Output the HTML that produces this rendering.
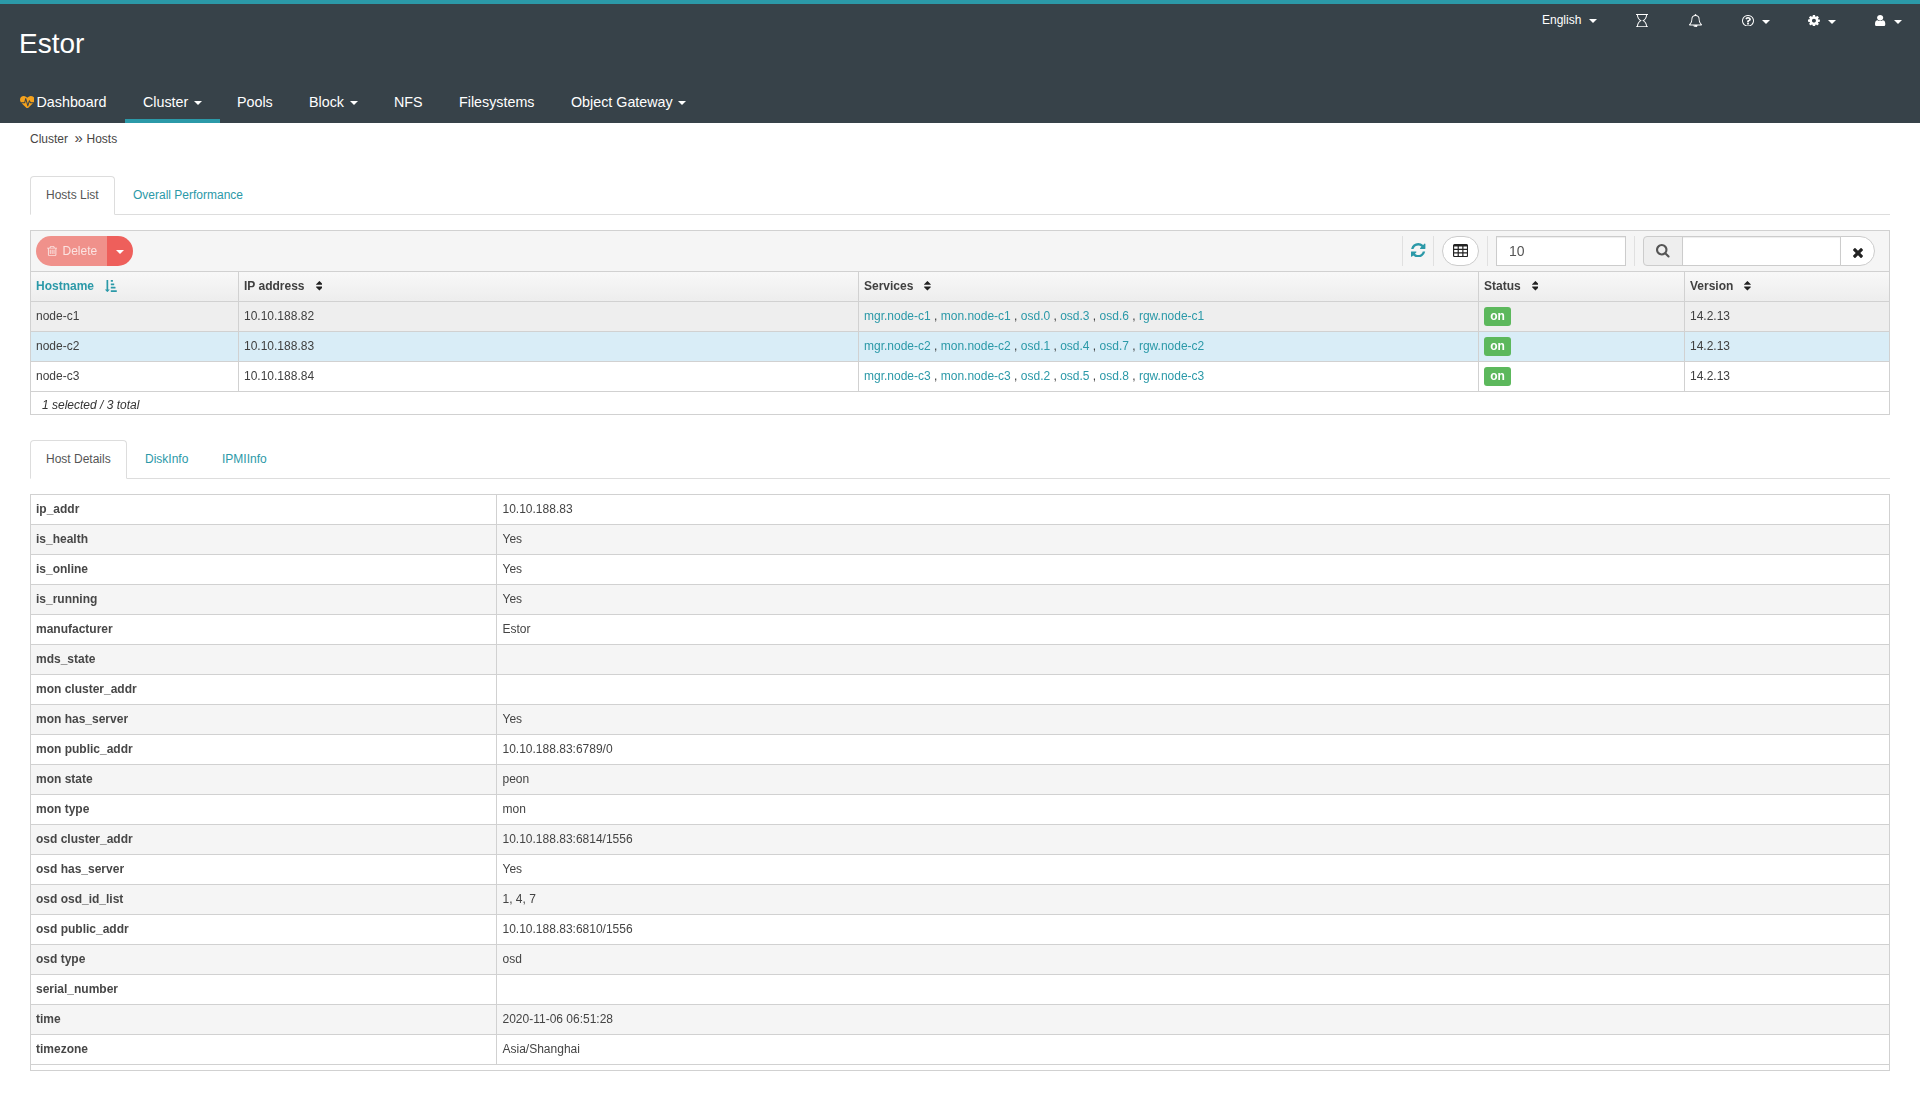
<!DOCTYPE html>
<html lang="en">
<head>
<meta charset="utf-8">
<title>Estor</title>
<style>
*{box-sizing:border-box}
html,body{margin:0;padding:0}
body{width:1920px;height:1096px;overflow:hidden;background:#fff;color:#333;
  font-family:"Liberation Sans",Arial,Helvetica,sans-serif;font-size:12px;line-height:17px}
a{color:#2b99a8;text-decoration:none}
svg{display:block}
.abs{position:absolute}
#hdr{position:absolute;left:0;top:0;width:1920px;height:123px;background:#374249}
#topbar{position:absolute;left:0;top:0;width:1920px;height:4px;background:#2b99a8}
#brand{position:absolute;left:19px;top:24px;font-size:28px;line-height:40px;color:#fff;white-space:nowrap}
.nv{position:absolute;top:91px;height:22px;line-height:22px;font-size:14.300px;color:#fff;white-space:nowrap}
.caret{display:inline-block;width:0;height:0;border-left:4px solid transparent;border-right:4px solid transparent;border-top:4px solid #fff;vertical-align:middle}
#actv{position:absolute;left:125px;top:119px;width:95px;height:4px;background:#2b99a8}
.tr{position:absolute;top:12px;height:17px;line-height:17px;font-size:12px;color:#fff;white-space:nowrap}
#bc{position:absolute;left:30px;top:131px;height:17px;white-space:nowrap;color:#474544}
.tabs{position:absolute;left:30px;width:1860px;height:39px;border-bottom:1px solid #ddd}
.tabs .t{position:absolute;top:0;height:39px;padding:10px 15px;border:1px solid transparent;border-radius:4px 4px 0 0;color:#2b99a8;white-space:nowrap}
.tabs .t.on{border-color:#ddd;border-bottom-color:#fff;background:#fff;color:#555}
#wrap{position:absolute;left:30px;top:230px;width:1860px;height:185px;border:1px solid #d1d1d1;background:#fff;will-change:transform}
#tb{position:absolute;left:0;top:0;width:1858px;height:40px;background:#f5f5f5}
.sep{position:absolute;top:5px;width:1px;height:30px;background:#e0e0e0}
.row{position:absolute;left:0;width:1858px;height:30px;border-top:1px solid #d1d1d1}
.row .c{position:absolute;top:0;height:29px;line-height:17px;color:#404040;padding:6px 5px 0 5px;white-space:nowrap;border-left:1px solid #d1d1d1}
.row .c:first-child{border-left:none}
.c1{left:0;width:207px}.c2{left:207px;width:620px}.c3{left:827px;width:620px}.c4{left:1447px;width:206px}.c5{left:1653px;width:205px}
.hd{background:linear-gradient(#f8f8f8,#ededed);font-weight:bold;color:#444}
.badge{display:inline-block;width:27px;height:19px;line-height:18px;border-radius:3px;background:#5cb85c;color:#fff;font-weight:bold;text-align:center;font-size:12px;position:relative;top:-1px;left:0}
#del{position:absolute;left:5px;top:5px;width:71px;height:30px;border-radius:15px 0 0 15px;background:#f0918b;color:#fff;font-size:12px;line-height:30px;white-space:nowrap}
#del span{position:absolute;left:26.500px;top:0;color:#fbe3e1}
#delc{position:absolute;left:76px;top:5px;width:26px;height:30px;border-radius:0 15px 15px 0;background:#ee5f5b}
#colbtn{position:absolute;left:1411px;top:5px;width:37px;height:30px;border:1px solid #ccc;border-radius:15px;background:#fff}
#num{position:absolute;left:1465px;top:5px;width:130px;height:30px;border:1px solid #ccc;background:#fff;color:#555;font-size:14px;line-height:29px;padding-left:12px;box-shadow:inset 0 1px 1px rgba(0,0,0,.075)}
#srch{position:absolute;left:1612px;top:5px;width:232px;height:30px}
#sa{position:absolute;left:0;top:0;width:40px;height:30px;border:1px solid #ccc;border-radius:4px 0 0 4px;background:#eee}
#si{position:absolute;left:39px;top:0;width:159px;height:30px;border:1px solid #ccc;background:#fff;box-shadow:inset 0 1px 1px rgba(0,0,0,.075)}
#sx{position:absolute;left:197px;top:0;width:35px;height:30px;border:1px solid #ccc;border-radius:0 15px 15px 0;background:#fff}
#dt{position:absolute;left:30px;top:494px;width:1860px;height:577px;border:1px solid #d1d1d1;will-change:transform}
#dt .r{position:absolute;left:0;width:1858px;height:30px;border-bottom:1px solid #d1d1d1}
#dt .r.o{background:#f5f5f5}
#dt .k{position:absolute;left:0;top:0;width:465px;height:29px;padding:6px 5px 0 5px;font-weight:bold;white-space:nowrap;color:#474747}
#dt .v{position:absolute;left:465px;top:0;width:1393px;height:29px;padding:6px 5px 0 5.500px;border-left:1px solid #d1d1d1;white-space:nowrap;color:#444}
</style>
</head>
<body>
<div id="hdr">
<div id="topbar"></div>
<div id="brand">Estor</div>
<svg class="abs" style="left:19.9px;top:95.5px" width="14.6" height="12.51" viewBox="0 128 1792 1536" preserveAspectRatio="none"><path fill="#f5a21d" d="M1280 1024h305q-5 6-10 10.500t-9 7.500l-3 4-623 600q-18 18-44 18t-44-18l-624-602q-5-2-21-20h369q22 0 39.500-13.500t22.500-34.500l70-281 190 667q6 20 23 33t39 13q21 0 38-13t23-33l146-485 56 112q18 35 57 35zm512-428q0 145-103 300h-369l-111-221q-8-17-25.500-27t-36.500-8q-45 5-56 46l-129 430-196-686q-6-20-23.500-33t-39.500-13-39 13.500-22 34.500l-116 464h-423q-103-155-103-300 0-220 127-344t351-124q62 0 126.500 21.500t120 58 95.500 68.500 76 68q36-36 76-68t95.500-68.500 120-58 126.500-21.500q224 0 351 124t127 344z"/></svg>
<div class="nv" style="left:36.500px">Dashboard</div>
<div class="nv" style="left:143px">Cluster</div><span class="caret abs" style="left:194px;top:101px"></span>
<div class="nv" style="left:237px">Pools</div>
<div class="nv" style="left:309px">Block</div><span class="caret abs" style="left:350px;top:101px"></span>
<div class="nv" style="left:394px">NFS</div>
<div class="nv" style="left:459px">Filesystems</div>
<div class="nv" style="left:571px">Object Gateway</div><span class="caret abs" style="left:678px;top:101px"></span>
<div id="actv"></div>
<div class="tr" style="left:1542px">English</div><span class="caret abs" style="left:1589px;top:19px"></span>
<svg class="abs" style="left:1636px;top:13.7px" width="12" height="13.3" viewBox="0 0 1536 1792" preserveAspectRatio="none"><path fill="#fff" d="M1408 128q0 261-106.500 461.500t-266.500 306.500q160 106 266.500 306.500t106.500 461.500h96q14 0 23 9t9 23v64q0 14-9 23t-23 9h-1472q-14 0-23-9t-9-23v-64q0-14 9-23t23-9h96q0-261 106.500-461.500t266.500-306.500q-160-106-266.500-306.500t-106.500-461.500h-96q-14 0-23-9t-9-23v-64q0-14 9-23t23-9h1472q14 0 23 9t9 23v64q0 14-9 23t-23 9h-96zm-534 708q77-29 149-92.500t129.500-152.500 92.500-210 35-253h-1024q0 132 35 253t92.500 210 129.500 152.500 149 92.500q19 7 30.500 23.500t11.500 36.500-11.500 36.500-30.500 23.500q-77 29-149 92.500t-129.500 152.500-92.500 210-35 253h1024q0-132-35-253t-92.500-210-129.500-152.500-149-92.500q-19-7-30.500-23.500t-11.500-36.500 11.500-36.500 30.500-23.500z"/></svg>
<svg class="abs" style="left:1688.6px;top:13.6px" width="13" height="13.4" viewBox="64 0 1664 1792" preserveAspectRatio="none"><path fill="#fff" d="M912 1696q0-16-16-16-59 0-101.500-42.500t-42.500-101.500q0-16-16-16t-16 16q0 73 51.500 124.500t124.500 51.500q16 0 16-16zm-666-288h1300q-266-300-266-832 0-51-24-105t-69-103-121.500-80.500-169.500-31.500-169.500 31.500-121.500 80.500-69 103-24 105q0 532-266 832zm1482 0q0 52-38 90t-90 38h-448q0 106-75 181t-181 75-181-75-75-181h-448q-52 0-90-38t-38-90q50-42 91-88t85-119.500 74.500-158.500 50-206 19.500-260q0-152 117-282.500t307-158.500q-8-19-8-39 0-40 28-68t68-28 68 28 28 68q0 20-8 39 190 28 307 158.500t117 282.500q0 139 19.500 260t50 206 74.500 158.500 85 119.500 91 88z"/></svg>
<svg class="abs" style="left:1742.1px;top:14.7px" width="12" height="11.5" viewBox="128 128 1536 1536" preserveAspectRatio="none"><path fill="#fff" d="M1008 1200v160q0 14-9 23t-23 9h-160q-14 0-23-9t-9-23v-160q0-14 9-23t23-9h160q14 0 23 9t9 23zm256-496q0 50-15 90t-45.500 69-52 44-59.500 36q-32 18-46.500 28t-26 24-11.500 29v32q0 14-9 23t-23 9h-160q-14 0-23-9t-9-23v-68q0-35 10.500-64.500t24-47.500 39-35.500 41-25.500 44.500-21q53-25 75-43t22-49q0-42-43.500-71.500t-95.500-29.500q-56 0-95 27-29 20-80 83-9 12-25 12-11 0-19-6l-108-82q-10-7-12-20t5-23q122-192 349-192 129 0 238.500 89.500t109.500 214.500zm-368-448q-130 0-248.500 51t-204 136.500-136.500 204-51 248.500 51 248.500 136.500 204 204 136.500 248.500 51 248.500-51 204-136.500 136.500-204 51-248.500-51-248.500-136.500-204-204-136.500-248.500-51zm768 640q0 209-103 385.500t-279.500 279.500-385.500 103-385.500-103-279.500-279.500-103-385.500 103-385.500 279.500-279.500 385.500-103 385.500 103 279.500 279.500 103 385.500z"/></svg><span class="caret abs" style="left:1762px;top:20px"></span>
<svg class="abs" style="left:1808.3px;top:14.9px" width="11.9" height="11.3" viewBox="128 128 1536 1536" preserveAspectRatio="none"><path fill="#fff" d="M1152 896q0-106-75-181t-181-75-181 75-75 181 75 181 181 75 181-75 75-181zm512-109v222q0 12-8 23t-20 13l-185 28q-19 54-39 91 35 50 107 138 10 12 10 25t-9 23q-27 37-99 108t-94 71q-12 0-26-9l-138-108q-44 23-91 38-16 136-29 186-7 28-36 28h-222q-14 0-24.500-8.500t-11.500-21.500l-28-184q-49-16-90-37l-141 107q-10 9-25 9-14 0-25-11-126-114-165-168-7-10-7-23 0-12 8-23 15-21 51-66.500t54-70.500q-27-50-41-99l-183-27q-13-2-21-12.500t-8-23.500v-222q0-12 8-23t19-13l186-28q14-46 39-92-40-57-107-138-10-12-10-24 0-10 9-23 26-36 98.500-107.500t94.500-71.500q13 0 26 10l138 107q44-23 91-38 16-136 29-186 7-28 36-28h222q14 0 24.500 8.500t11.500 21.500l28 184q49 16 90 37l142-107q9-9 24-9 13 0 25 10 129 119 165 170 7 8 7 22 0 12-8 23-15 21-51 66.500t-54 70.500q26 50 41 98l183 28q13 2 21 12.500t8 23.500z"/></svg><span class="caret abs" style="left:1828px;top:20px"></span>
<svg class="abs" style="left:1875.3px;top:14.7px" width="10.3" height="11.3" viewBox="256 128 1280 1536" preserveAspectRatio="none"><path fill="#fff" d="M1536 1399q0 109-62.500 187t-150.500 78h-854q-88 0-150.500-78t-62.500-187q0-85 8.500-160.500t31.500-152 58.500-131 94-89 134.500-34.500q131 128 313 128t313-128q76 0 134.500 34.500t94 89 58.500 131 31.500 152 8.500 160.500zm-256-887q0 159-112.500 271.500t-271.500 112.500-271.500-112.500-112.500-271.500 112.500-271.500 271.500-112.500 271.500 112.500 112.500 271.500z"/></svg><span class="caret abs" style="left:1894px;top:20px"></span>
</div>
<div id="content">
<div id="bc">Cluster<span class="abs" style="left:44.500px;top:-2px;font-size:15px;line-height:17px">&raquo;</span><span class="abs" style="left:56.500px;top:0">Hosts</span></div>
<div class="tabs" style="top:176px">
<div class="t on" style="left:0">Hosts List</div>
<div class="t" style="left:87px">Overall Performance</div>
</div>
<div id="wrap">
<div id="tb">
<div id="del"><svg class="abs" style="left:11.1px;top:10px" width="10.3" height="10" viewBox="192 128 1408 1536" preserveAspectRatio="none"><path fill="#fbe3e1" d="M704 736v576q0 14-9 23t-23 9h-64q-14 0-23-9t-9-23v-576q0-14 9-23t23-9h64q14 0 23 9t9 23zm256 0v576q0 14-9 23t-23 9h-64q-14 0-23-9t-9-23v-576q0-14 9-23t23-9h64q14 0 23 9t9 23zm256 0v576q0 14-9 23t-23 9h-64q-14 0-23-9t-9-23v-576q0-14 9-23t23-9h64q14 0 23 9t9 23zm128 724v-948h-896v948q0 22 7 40.500t14.500 27 10.500 8.500h832q3 0 10.500-8.500t14.500-27 7-40.500zm-672-1076h448l-48-117q-7-9-17-11h-317q-10 2-17 11zm928 32v64q0 14-9 23t-23 9h-96v948q0 83-47 143.500t-113 60.500h-832q-66 0-113-58.500t-47-141.500v-952h-96q-14 0-23-9t-9-23v-64q0-14 9-23t23-9h309l70-167q15-37 54-63t79-26h320q40 0 79 26t54 63l70 167h309q14 0 23 9t9 23z"/></svg><span>Delete</span></div>
<div id="delc"><span class="caret abs" style="left:9px;top:14px"></span></div>
<div class="sep" style="left:1371px"></div>
<div class="sep" style="left:1402px"></div>
<div class="sep" style="left:1456px"></div>
<div class="sep" style="left:1603px"></div>
<svg class="abs" style="left:1380.3px;top:11.8px" width="14.4" height="14.4" viewBox="0 0 1536 1536" preserveAspectRatio="none"><path fill="#2b99a8" d="M1511 928q0 5-1 7-64 268-268 434.500t-478 166.500q-146 0-282.500-55t-243.500-157l-129 129q-19 19-45 19t-45-19-19-45v-448q0-26 19-45t45-19h448q26 0 45 19t19 45-19 45l-137 137q71 66 161 102t187 36q134 0 250-65t186-179q11-17 53-117 8-23 30-23h192q13 0 22.500 9.500t9.500 22.500zm25-800v448q0 26-19 45t-45 19h-448q-26 0-45-19t-19-45 19-45l138-138q-148-137-349-137-134 0-250 65t-186 179q-11 17-53 117-8 23-30 23h-199q-13 0-22.500-9.500t-9.500-22.500v-7q65-268 270-434.500t480-166.500q146 0 284 55.500t245 156.500l130-129q19-19 45-19t45 19 19 45z"/></svg>
<div id="colbtn"><svg class="abs" style="left:10.1px;top:6.9px" width="15.1" height="13.1" viewBox="64 128 1664 1408" preserveAspectRatio="none"><path fill="#222" d="M576 1376v-192q0-14-9-23t-23-9h-320q-14 0-23 9t-9 23v192q0 14 9 23t23 9h320q14 0 23-9t9-23zm0-384v-192q0-14-9-23t-23-9h-320q-14 0-23 9t-9 23v192q0 14 9 23t23 9h320q14 0 23-9t9-23zm512 384v-192q0-14-9-23t-23-9h-320q-14 0-23 9t-9 23v192q0 14 9 23t23 9h320q14 0 23-9t9-23zm-512-768v-192q0-14-9-23t-23-9h-320q-14 0-23 9t-9 23v192q0 14 9 23t23 9h320q14 0 23-9t9-23zm512 384v-192q0-14-9-23t-23-9h-320q-14 0-23 9t-9 23v192q0 14 9 23t23 9h320q14 0 23-9t9-23zm512 384v-192q0-14-9-23t-23-9h-320q-14 0-23 9t-9 23v192q0 14 9 23t23 9h320q14 0 23-9t9-23zm-512-768v-192q0-14-9-23t-23-9h-320q-14 0-23 9t-9 23v192q0 14 9 23t23 9h320q14 0 23-9t9-23zm512 384v-192q0-14-9-23t-23-9h-320q-14 0-23 9t-9 23v192q0 14 9 23t23 9h320q14 0 23-9t9-23zm0-384v-192q0-14-9-23t-23-9h-320q-14 0-23 9t-9 23v192q0 14 9 23t23 9h320q14 0 23-9t9-23zm128-320v1088q0 66-47 113t-113 47h-1344q-66 0-113-47t-47-113v-1088q0-66 47-113t113-47h1344q66 0 113 47t47 113z"/></svg></div>
<div id="num">10</div>
<div id="srch"><div id="sa"><svg class="abs" style="left:12.2px;top:7.2px" width="13.6" height="13.6" viewBox="64 128 1664 1664" preserveAspectRatio="none"><path fill="#555" d="M1216 832q0-185-131.500-316.500t-316.500-131.500-316.500 131.500-131.500 316.500 131.500 316.500 316.500 131.500 316.500-131.500 131.500-316.500zm512 832q0 52-38 90t-90 38q-54 0-90-38l-343-342q-179 124-399 124-143 0-273.500-55.500t-225-150-150-225-55.500-273.500 55.500-273.500 150-225 225-150 273.500-55.500 273.500 55.500 225 150 150 225 55.500 273.500q0 220-124 399l343 343q37 37 37 90z"/></svg></div><div id="si"></div><div id="sx"><svg class="abs" style="left:11.8px;top:10.6px" width="10" height="10" viewBox="302 366 1188 1188" preserveAspectRatio="none"><path fill="#222" d="M1490 1322q0 40-28 68l-136 136q-28 28-68 28t-68-28l-294-294-294 294q-28 28-68 28t-68-28l-136-136q-28-28-28-68t28-68l294-294-294-294q-28-28-28-68t28-68l136-136q28-28 68-28t68 28l294 294 294-294q28-28 68-28t68 28l136 136q28 28 28 68t-28 68l-294 294 294 294q28 28 28 68z"/></svg></div></div>
</div>
<div class="row hd" style="top:40px">
<div class="c c1" style="color:#2b99a8">Hostname<svg class="abs" style="left:74.1px;top:8px" width="11.79" height="12" viewBox="31.2174 0 1760.78 1792" preserveAspectRatio="none"><path fill="#2b99a8" d="M736 1440q0 12-10 24l-319 319q-10 9-23 9-12 0-23-9l-320-320q-15-16-7-35 8-20 30-20h192v-1376q0-14 9-23t23-9h192q14 0 23 9t9 23v1376h192q14 0 23 9t9 23zm1056 128v192q0 14-9 23t-23 9h-832q-14 0-23-9t-9-23v-192q0-14 9-23t23-9h832q14 0 23 9t9 23zm-192-512v192q0 14-9 23t-23 9h-640q-14 0-23-9t-9-23v-192q0-14 9-23t23-9h640q14 0 23 9t9 23zm-192-512v192q0 14-9 23t-23 9h-448q-14 0-23-9t-9-23v-192q0-14 9-23t23-9h448q14 0 23 9t9 23zm-192-512v192q0 14-9 23t-23 9h-256q-14 0-23-9t-9-23v-192q0-14 9-23t23-9h256q14 0 23 9t9 23z"/></svg></div>
<div class="c c2">IP address<svg class="abs" style="left:76.6px;top:9.2px" width="6.86" height="9.43" viewBox="384 192 1024 1408" preserveAspectRatio="none"><path fill="#222" d="M1408 1088q0 26-19 45l-448 448q-19 19-45 19t-45-19l-448-448q-19-19-19-45t19-45 45-19h896q26 0 45 19t19 45zm0-384q0 26-19 45t-45 19h-896q-26 0-45-19t-19-45 19-45l448-448q19-19 45-19t45 19l448 448q19 19 19 45z"/></svg></div>
<div class="c c3">Services<svg class="abs" style="left:65px;top:9.2px" width="6.86" height="9.43" viewBox="384 192 1024 1408" preserveAspectRatio="none"><path fill="#222" d="M1408 1088q0 26-19 45l-448 448q-19 19-45 19t-45-19l-448-448q-19-19-19-45t19-45 45-19h896q26 0 45 19t19 45zm0-384q0 26-19 45t-45 19h-896q-26 0-45-19t-19-45 19-45l448-448q19-19 45-19t45 19l448 448q19 19 19 45z"/></svg></div>
<div class="c c4">Status<svg class="abs" style="left:52.6px;top:9.2px" width="6.86" height="9.43" viewBox="384 192 1024 1408" preserveAspectRatio="none"><path fill="#222" d="M1408 1088q0 26-19 45l-448 448q-19 19-45 19t-45-19l-448-448q-19-19-19-45t19-45 45-19h896q26 0 45 19t19 45zm0-384q0 26-19 45t-45 19h-896q-26 0-45-19t-19-45 19-45l448-448q19-19 45-19t45 19l448 448q19 19 19 45z"/></svg></div>
<div class="c c5">Version<svg class="abs" style="left:59px;top:9.2px" width="6.86" height="9.43" viewBox="384 192 1024 1408" preserveAspectRatio="none"><path fill="#222" d="M1408 1088q0 26-19 45l-448 448q-19 19-45 19t-45-19l-448-448q-19-19-19-45t19-45 45-19h896q26 0 45 19t19 45zm0-384q0 26-19 45t-45 19h-896q-26 0-45-19t-19-45 19-45l448-448q19-19 45-19t45 19l448 448q19 19 19 45z"/></svg></div>
</div>
<div class="row" style="top:70px;background:#eee">
<div class="c c1">node-c1</div>
<div class="c c2">10.10.188.82</div>
<div class="c c3"><a>mgr.node-c1</a> , <a>mon.node-c1</a> , <a>osd.0</a> , <a>osd.3</a> , <a>osd.6</a> , <a>rgw.node-c1</a></div>
<div class="c c4"><span class="badge">on</span></div>
<div class="c c5">14.2.13</div>
</div>
<div class="row" style="top:100px;background:#d9edf7">
<div class="c c1">node-c2</div>
<div class="c c2">10.10.188.83</div>
<div class="c c3"><a>mgr.node-c2</a> , <a>mon.node-c2</a> , <a>osd.1</a> , <a>osd.4</a> , <a>osd.7</a> , <a>rgw.node-c2</a></div>
<div class="c c4"><span class="badge">on</span></div>
<div class="c c5">14.2.13</div>
</div>
<div class="row" style="top:130px;background:#fff">
<div class="c c1">node-c3</div>
<div class="c c2">10.10.188.84</div>
<div class="c c3"><a>mgr.node-c3</a> , <a>mon.node-c3</a> , <a>osd.2</a> , <a>osd.5</a> , <a>osd.8</a> , <a>rgw.node-c3</a></div>
<div class="c c4"><span class="badge">on</span></div>
<div class="c c5">14.2.13</div>
</div>
<div class="row" style="top:160px;height:23px;background:#fff"><div style="position:absolute;left:11px;top:5px;font-style:italic;white-space:nowrap">1 selected / 3 total</div></div>
</div>
<div class="tabs" style="top:440px">
<div class="t on" style="left:0">Host Details</div>
<div class="t" style="left:99px">DiskInfo</div>
<div class="t" style="left:176px">IPMIInfo</div>
</div>
<div id="dt">
<div class="r" style="top:0px"><div class="k">ip_addr</div><div class="v">10.10.188.83</div></div>
<div class="r o" style="top:30px"><div class="k">is_health</div><div class="v">Yes</div></div>
<div class="r" style="top:60px"><div class="k">is_online</div><div class="v">Yes</div></div>
<div class="r o" style="top:90px"><div class="k">is_running</div><div class="v">Yes</div></div>
<div class="r" style="top:120px"><div class="k">manufacturer</div><div class="v">Estor</div></div>
<div class="r o" style="top:150px"><div class="k">mds_state</div><div class="v"></div></div>
<div class="r" style="top:180px"><div class="k">mon cluster_addr</div><div class="v"></div></div>
<div class="r o" style="top:210px"><div class="k">mon has_server</div><div class="v">Yes</div></div>
<div class="r" style="top:240px"><div class="k">mon public_addr</div><div class="v">10.10.188.83:6789/0</div></div>
<div class="r o" style="top:270px"><div class="k">mon state</div><div class="v">peon</div></div>
<div class="r" style="top:300px"><div class="k">mon type</div><div class="v">mon</div></div>
<div class="r o" style="top:330px"><div class="k">osd cluster_addr</div><div class="v">10.10.188.83:6814/1556</div></div>
<div class="r" style="top:360px"><div class="k">osd has_server</div><div class="v">Yes</div></div>
<div class="r o" style="top:390px"><div class="k">osd osd_id_list</div><div class="v">1, 4, 7</div></div>
<div class="r" style="top:420px"><div class="k">osd public_addr</div><div class="v">10.10.188.83:6810/1556</div></div>
<div class="r o" style="top:450px"><div class="k">osd type</div><div class="v">osd</div></div>
<div class="r" style="top:480px"><div class="k">serial_number</div><div class="v"></div></div>
<div class="r o" style="top:510px"><div class="k">time</div><div class="v">2020-11-06 06:51:28</div></div>
<div class="r" style="top:540px"><div class="k">timezone</div><div class="v">Asia/Shanghai</div></div>
</div>
</div>
</body>
</html>
